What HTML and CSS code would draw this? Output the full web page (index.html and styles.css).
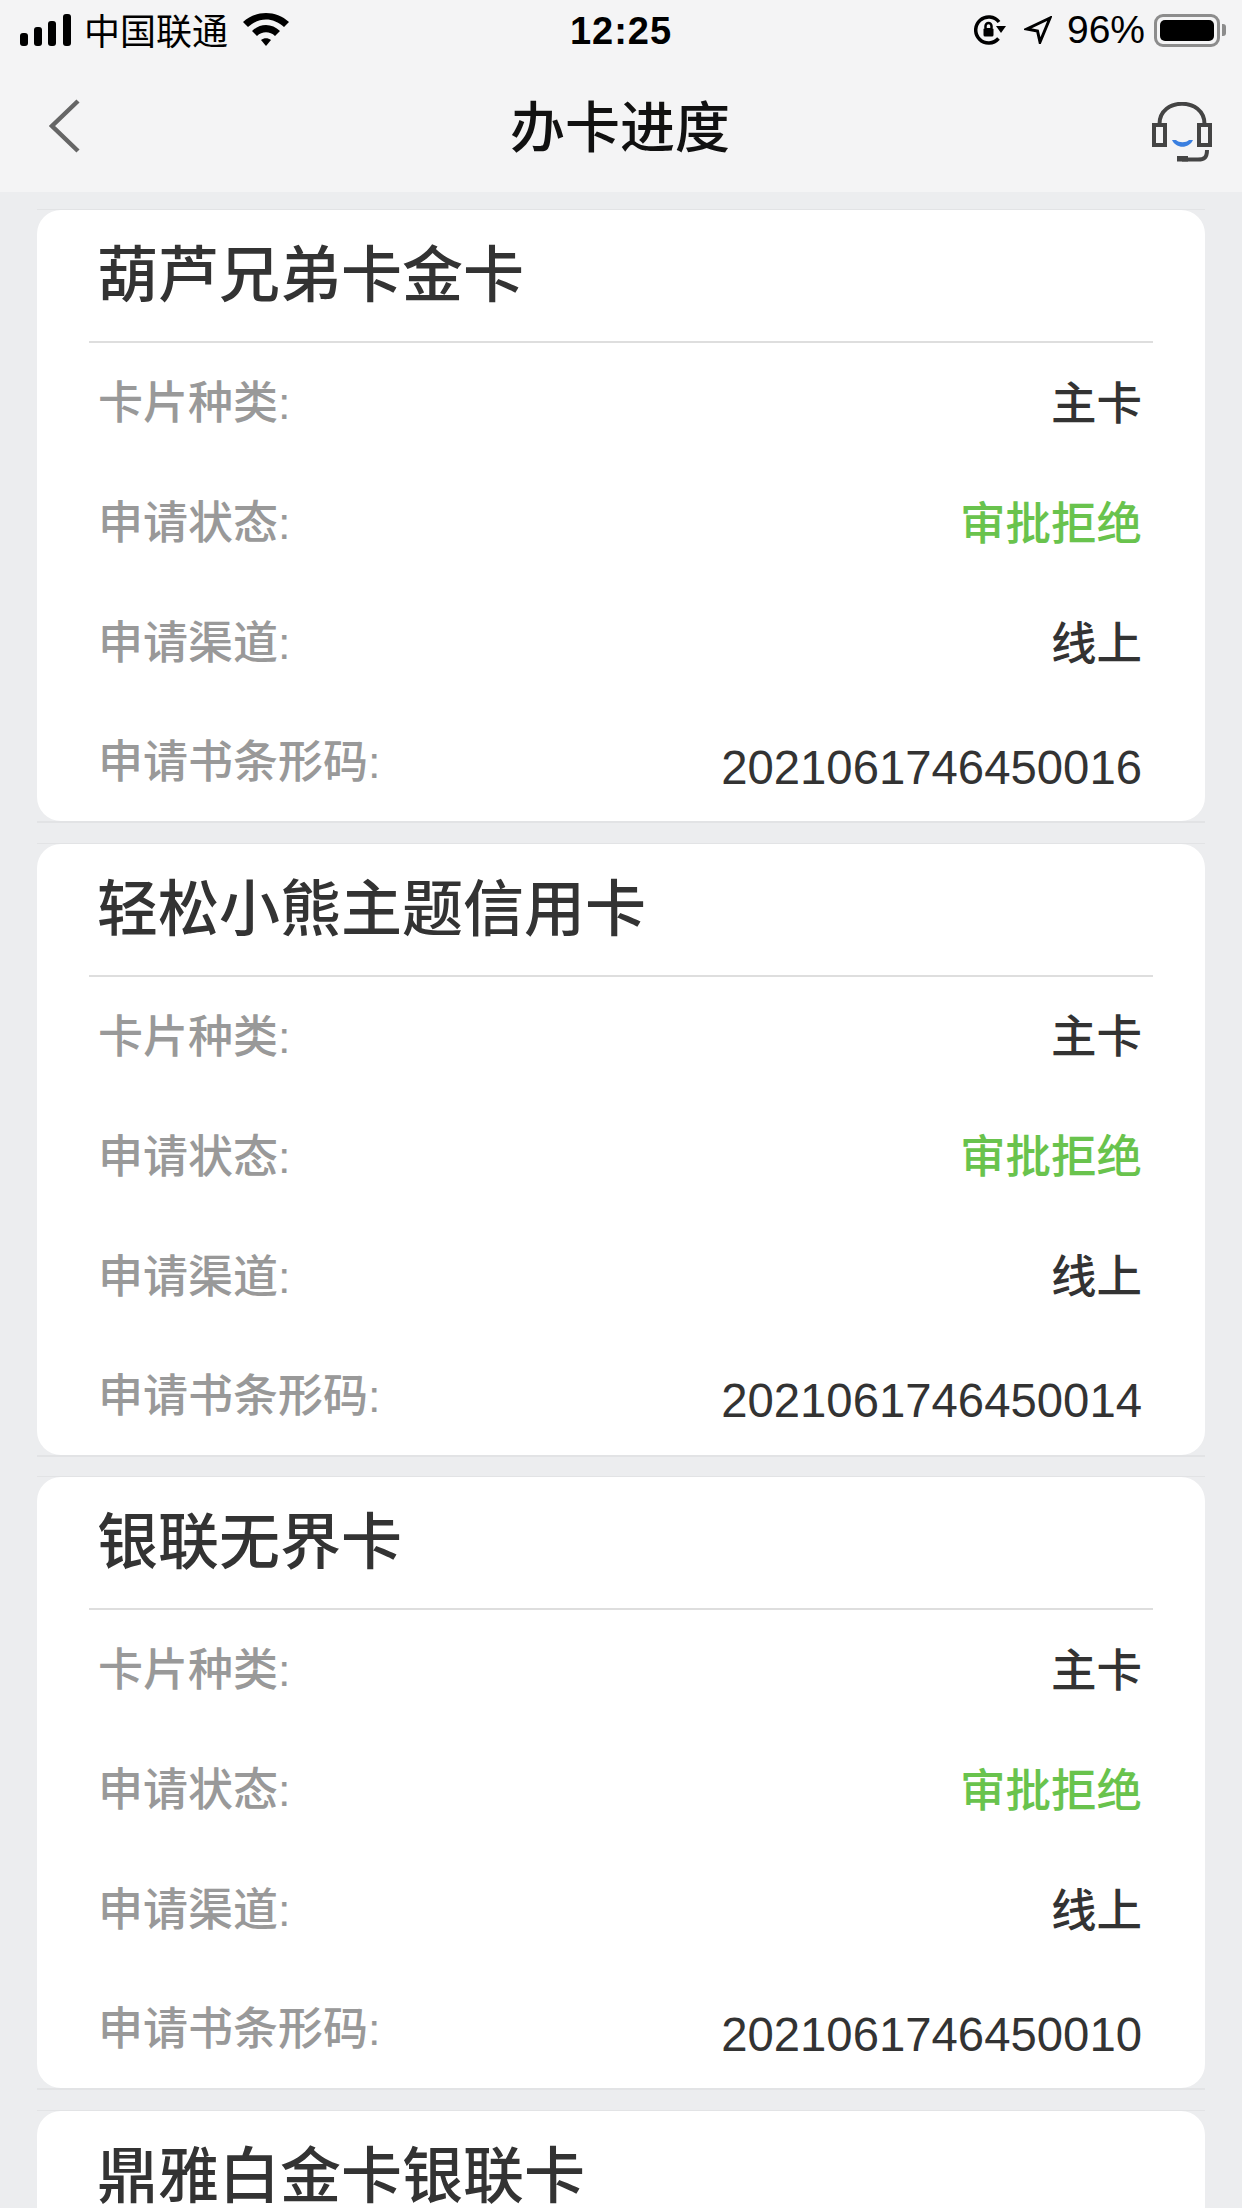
FILE: index.html
```html
<!DOCTYPE html>
<html lang="zh-CN">
<head>
  <meta charset="UTF-8">
  <meta name="viewport" content="width=device-width, initial-scale=1.0">
  <title>办卡进度</title>
  <link rel="stylesheet" href="styles.css">
</head>
<body>
  <header class="top">
    <div class="status-bar">
      <div class="status-left">
        <svg class="signal" width="52" height="32" viewBox="0 0 52 32">
          <rect x="0" y="19" width="8" height="13" rx="3"></rect>
          <rect x="14" y="13" width="8" height="19" rx="3"></rect>
          <rect x="28" y="7" width="8" height="25" rx="3"></rect>
          <rect x="43" y="0" width="8" height="32" rx="3"></rect>
        </svg>
        <span class="carrier">中国联通</span>
        <svg class="wifi" width="46" height="34" viewBox="0 0 46 34">
          <path d="M0 9 C13 -3 33 -3 46 9 L41 14 C30 4 16 4 5 14 Z"></path>
          <path d="M9 18 C17 10 29 10 37 18 L32 23 C27 18 19 18 14 23 Z"></path>
          <path d="M18 27 C21 24.500 25 24.500 28 27 L23 33 Z"></path>
        </svg>
      </div>
      <div class="clock">12:25</div>
      <div class="status-right">
        <svg class="rotate-lock" width="32" height="30" viewBox="0 0 32 30">
          <path class="line" d="M24.500 23.500 A13 13 0 1 1 25 7"></path>
          <path d="M22 11 L32 11 L27 18 Z"></path>
          <rect x="9.500" y="13" width="10" height="8.500" rx="1.500"></rect>
          <path class="thin" d="M11.500 13 V11 A3 3 0 0 1 17.500 11 V13"></path>
        </svg>
        <svg class="arrow" width="28" height="28" viewBox="0 0 28 28">
          <path class="line" d="M26 2 L3 13 L13.500 15 L16 26 Z"></path>
        </svg>
        <span class="battery-text">96%</span>
        <div class="battery">
          <div class="battery-body"><div class="battery-level"></div></div>
          <div class="battery-nub"></div>
        </div>
      </div>
    </div>
    <nav class="nav-bar">
      <svg class="back" width="32" height="56" viewBox="0 0 32 56">
        <path d="M29 3 L3 28 L29 53"></path>
      </svg>
      <h1>办卡进度</h1>
      <svg class="service" width="60" height="60" viewBox="0 0 60 60">
        <path class="band" d="M7.500 22 C7.500 -5 52.500 -5 52.500 22"></path>
        <rect class="band" x="2" y="23" width="11" height="20"></rect>
        <rect class="band" x="47" y="23" width="11" height="20"></rect>
        <path class="mic" d="M55 48 C55 56 52 57.500 46 57.500 H30"></path>
        <path class="mic-tip" d="M25 54 H36 V59.500 H25 Z"></path>
        <path class="smile" d="M20 38 H24 C27 41 34 41 37 38 H41 C37 47 24 47 20 38 Z"></path>
      </svg>
    </nav>
  </header>

  <main class="card-list">
    <section class="card">
      <div class="card-body">
        <h2 class="card-title">葫芦兄弟卡金卡</h2>
        <div class="row"><span class="label">卡片种类:</span><span class="value">主卡</span></div>
        <div class="row"><span class="label">申请状态:</span><span class="value rejected">审批拒绝</span></div>
        <div class="row"><span class="label">申请渠道:</span><span class="value">线上</span></div>
        <div class="row row-code"><span class="label">申请书条形码:</span><span class="value code">2021061746450016</span></div>
      </div>
    </section>
    <section class="card">
      <div class="card-body">
        <h2 class="card-title">轻松小熊主题信用卡</h2>
        <div class="row"><span class="label">卡片种类:</span><span class="value">主卡</span></div>
        <div class="row"><span class="label">申请状态:</span><span class="value rejected">审批拒绝</span></div>
        <div class="row"><span class="label">申请渠道:</span><span class="value">线上</span></div>
        <div class="row row-code"><span class="label">申请书条形码:</span><span class="value code">2021061746450014</span></div>
      </div>
    </section>
    <section class="card">
      <div class="card-body">
        <h2 class="card-title">银联无界卡</h2>
        <div class="row"><span class="label">卡片种类:</span><span class="value">主卡</span></div>
        <div class="row"><span class="label">申请状态:</span><span class="value rejected">审批拒绝</span></div>
        <div class="row"><span class="label">申请渠道:</span><span class="value">线上</span></div>
        <div class="row row-code"><span class="label">申请书条形码:</span><span class="value code">2021061746450010</span></div>
      </div>
    </section>
    <section class="card">
      <div class="card-body">
        <h2 class="card-title">鼎雅白金卡银联卡</h2>
      </div>
    </section>
  </main>
</body>
</html>
```

FILE: styles.css
```css
/* Reset */
* {
  box-sizing: border-box;
  margin: 0;
  padding: 0;
}
html, body {
  height: 2208px;
  overflow: hidden;
}
body {
  background: #ecedef;
  font-family: "Liberation Sans", "Noto Sans CJK SC", sans-serif;
  color: #333;
}

/* Status bar + nav */
.top {
  background: #f4f4f5;
  height: 192px;
}
.status-bar {
  position: relative;
  display: flex;
  justify-content: space-between;
  align-items: center;
  height: 60px;
  padding: 0 16px 0 20px;
  color: #000;
}
.status-left,
.status-right {
  display: flex;
  align-items: center;
}
.signal,
.wifi {
  fill: #000;
}
.carrier {
  font-size: 36px;
  margin: 0 0 2px 12px;
}
.wifi {
  margin-left: 15px;
}
.clock {
  position: absolute;
  left: 0;
  right: 0;
  margin-top: 2px;
  text-align: center;
  font-size: 38px;
  font-weight: bold;
  letter-spacing: 1px;
}
.status-right svg {
  fill: #000;
}
.status-right .line {
  fill: none;
  stroke: #000;
  stroke-width: 3.500;
}
.status-right .arrow .line {
  stroke-width: 3;
}
.status-right .thin {
  fill: none;
  stroke: #000;
  stroke-width: 2.500;
}
.rotate-lock {
  margin-left: -2px;
}
.arrow {
  margin-left: 18px;
}
.battery-text {
  font-size: 39px;
  margin-left: 15px;
}
.battery {
  display: flex;
  align-items: center;
  margin-left: 9px;
}
.battery-body {
  width: 66px;
  height: 33px;
  border: 3px solid #8c8c8c;
  border-radius: 9px;
  padding: 3px;
}
.battery-level {
  height: 100%;
  background: #000;
  border-radius: 5px;
}
.battery-nub {
  width: 4px;
  height: 12px;
  margin-left: 2px;
  background: #8c8c8c;
  border-radius: 0 3px 3px 0;
}
.nav-bar {
  display: flex;
  align-items: center;
  height: 132px;
  padding: 0 30px 0 49px;
}
.nav-bar h1 {
  flex: 1;
  padding: 0 0 6px 7px;
  text-align: center;
  font-size: 55px;
  font-weight: 500;
  color: #111;
}
.back {
  fill: none;
  stroke: #666;
  stroke-width: 4.500;
}
.service {
  fill: none;
  margin-top: 12px;
}
.service .band,
.service .mic {
  stroke: #444;
  stroke-width: 4;
}
.service .mic-tip {
  fill: #444;
}
.service .smile {
  fill: #3a7fe0;
}

/* Cards */
.card-list {
  display: flex;
  flex-direction: column;
  gap: 19.600px;
  padding: 17px 37px 0;
}
.card {
  border-top: 1px solid #e2e3e5;
  border-bottom: 2px solid #e2e3e5;
}
.card-body {
  background: #fff;
  border-radius: 24px;
  padding: 0 52px;
}
.card-title {
  height: 133px;
  line-height: 133px;
  padding-left: 8px;
  font-size: 61px;
  font-weight: 500;
  color: #333;
  border-bottom: 2px solid #dedede;
}
.row {
  display: flex;
  justify-content: space-between;
  align-items: center;
  height: 120px;
  padding: 0 11px 7px 9px;
}
.row-code {
  height: 118px;
}
.label {
  font-size: 45px;
  font-weight: 500;
  color: #999;
}
.value {
  font-size: 45.500px;
  font-weight: 500;
  color: #333;
}
.rejected {
  color: #69c34d;
}
.code {
  font-size: 47.300px;
  font-weight: 400;
  padding-top: 17px;
}
```
